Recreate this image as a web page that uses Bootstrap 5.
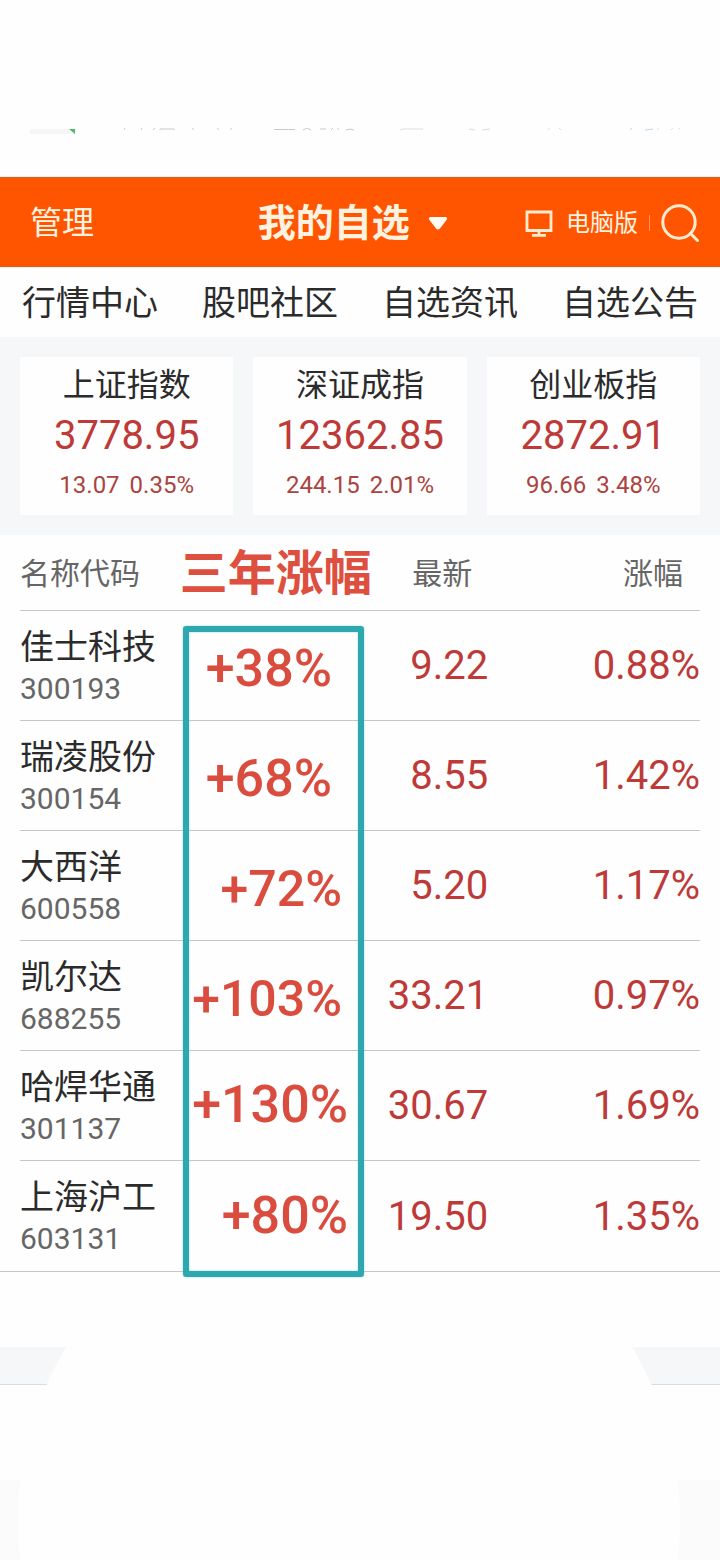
<!DOCTYPE html>
<html lang="zh-CN">
<head>
<meta charset="utf-8">
<meta name="viewport" content="width=device-width, initial-scale=1">
<title>我的自选</title>
<link rel="stylesheet" href="https://cdn.jsdelivr.net/npm/bootstrap@5.3.0/dist/css/bootstrap.min.css">
<style>
  body { font-family: Roboto, "Noto Sans CJK SC", sans-serif; color: #2b2b2b; background: #fefefe; line-height: 1; overflow-x: hidden; }
  a, button { color: inherit; text-decoration: none; }
  .status-area { height: 177px; padding-top: 128px; }
  .status-area svg { display: block; }
  .app-bar { height: 90px; padding: 2px 20px 0 30px; background: #ff5500; color: #fff3e0; border-top: 1px solid #c4683a; border-bottom: 1px solid #c4683a; box-shadow: 0 0 0 1px #ffe9d0; }
  .app-bar button { background: none; border: 0; padding: 0; white-space: nowrap; }
  .bar-left { width: 34%; font-size: 32px; }
  .bar-title { font-size: 38px; font-weight: 700; gap: 18px; }
  .bar-pc { font-size: 24px; gap: 13px; }
  .bar-sep { width: 1px; height: 16px; background: #ff9a5c; margin: 0 11px; }
  .tabs-row { height: 70px; padding-top: 2px; font-size: 34px; }
  .band { background: #f6f7f9; }
  .index-row { padding: 20px; gap: 20px; }
  .index-tile { height: 158px; padding-top: 8px; background: #fefefe; }
  .index-name { font-size: 32px; line-height: 40px; }
  .index-value { font-size: 40px; line-height: 62px; color: #bd3a38; }
  .index-change { font-size: 24px; line-height: 36px; gap: 10px; color: #ab4340; }
  .quotes { margin: 0 20px; }
  .quotes table { table-layout: fixed; width: 100%; border-collapse: collapse; }
  .quotes th { height: 75px; font-size: 30px; font-weight: 400; color: #666; white-space: nowrap; padding: 4px 0 0; }
  .quotes td { height: 110px; padding: 0; white-space: nowrap; }
  .quotes tr { border-bottom: 1px solid #c6c6c6; }
  .quotes tbody tr:last-child { border-bottom: 0; }
  .quotes tbody tr:last-child td { height: 111px; }
  .c-name { width: 23.5%; } .c-three { width: 26.5%; } .c-last { width: 19%; } .c-rate { width: 31%; }
  .quotes th.three-title { font-size: 48px; font-weight: 700; color: #dd4f3e; }
  .quotes th.head-end { padding-right: 17px; }
  .quotes td.stock { padding-top: 5px; }
  .stock-name { display: block; font-size: 34px; line-height: 42px; }
  .stock-code { display: block; font-size: 30px; line-height: 42px; color: #666; }
  .quotes td.price { padding-top: 2px; font-size: 40px; color: #bd3a38; text-align: right; }
  .quotes td.last-price { padding-right: 1px; }
  .quotes td.three { font-size: 52px; font-weight: 500; color: #d94c3e; text-align: right; }
  .quotes td.in-1 { padding: 8px 28px 0 0; }
  .quotes td.in-2 { padding: 8px 18px 0 0; font-size: 50px; }
  .quotes td.in-3 { padding-right: 12px; }
  .frame-box { position: absolute; left: 24%; width: calc(26% + 4px); top: 91px; bottom: -6px; border: 6px solid #2fa7af; border-radius: 3px; box-shadow: 0 0 2px #7fd4d8, inset 0 0 2px #7fd4d8; pointer-events: none; }
  .list-end { border-top: 1px solid #c6c6c6; height: 76px; }
  .page-foot { position: relative; overflow: hidden; }
  .foot-band { height: 38px; border-bottom: 1px solid #dcdcdc; }
  .foot-gap { height: 95px; }
  .foot-base { height: 80px; background: #fbfbfb; }
  .foot-disc { position: absolute; left: 2.5%; top: -159px; width: 92%; aspect-ratio: 1; border-radius: 50%; background: #fefefe; }
</style>
</head>
<body>
<div class="status-area">
  <svg width="100%" height="7" viewBox="0 0 720 7" aria-hidden="true">
    <path d="M30 1H75V6H30z" fill="#f4f6f7"/><path d="M69 1H75V6z" fill="#55b56a"/>
    <g fill="none" stroke="#c9c9c9">
      <path d="M124 2l1-2M141 2l1-2M153 2l2-2M160 2V1H174V2M192 0l2 2M217 0l2 2M230 2l2-2M274 1.500H295M303 2l4-2 4 2M320 1H326M331 2l2-2M338 2V0M346 2q4-2 8 0"/>
      <path d="M400 2l3-1H423M469 1l6 1M482 2l8-1M549 0v2M559 0l2 2" stroke="#dcdde2"/>
      <path d="M630 2l2-2M645 2l8-1" stroke="#bcd8ee"/><path d="M657 2l2-2M671 2l2-2M678 2l2-2" stroke="#f6dcc0"/>
    </g>
  </svg>
</div>
<header class="app-bar d-flex align-items-center">
  <div class="bar-left"><button type="button">管理</button></div>
  <button type="button" class="bar-title d-flex align-items-center">我的自选
    <svg width="20" height="13" viewBox="0 0 20 13" aria-hidden="true"><path d="M2 0H18Q20 1 18.500 3L12 11.500Q10 13.500 8 11.500L1.500 3Q0 1 2 0z" fill="#fffaf2"/></svg>
  </button>
  <button type="button" class="bar-pc d-flex align-items-center ms-auto">
    <svg width="28" height="27" viewBox="0 0 28 27" fill="none" stroke="#ffecd0" stroke-width="2.800" aria-hidden="true"><path d="M2 2H26V20.500H2zM14 20.500V25M7 25.300H21"/></svg>
    电脑版
  </button>
  <span class="bar-sep"></span>
  <button type="button" aria-label="搜索">
    <svg class="d-block" width="39" height="39" viewBox="0 0 39 39" fill="none" stroke="#ffecd0" stroke-width="3" stroke-linecap="round" aria-hidden="true"><circle cx="18" cy="18" r="16.200"/><path d="M29.500 29.500L36.500 36.500"/></svg>
  </button>
</header>
<nav class="tabs-row d-flex align-items-center text-center">
  <a class="col-3" href="#">行情中心</a><a class="col-3" href="#">股吧社区</a><a class="col-3" href="#">自选资讯</a><a class="col-3" href="#">自选公告</a>
</nav>
<section class="band index-row d-flex text-center">
  <a href="#" class="index-tile flex-fill w-100"><div class="index-name">上证指数</div><div class="index-value">3778.95</div><div class="index-change d-flex justify-content-center"><span>13.07</span><span>0.35%</span></div></a>
  <a href="#" class="index-tile flex-fill w-100"><div class="index-name">深证成指</div><div class="index-value">12362.85</div><div class="index-change d-flex justify-content-center"><span>244.15</span><span>2.01%</span></div></a>
  <a href="#" class="index-tile flex-fill w-100"><div class="index-name">创业板指</div><div class="index-value">2872.91</div><div class="index-change d-flex justify-content-center"><span>96.66</span><span>3.48%</span></div></a>
</section>
<main>
  <div class="quotes position-relative">
    <table>
      <thead>
        <tr><th class="c-name" scope="col">名称代码</th><th class="c-three three-title" scope="col">三年涨幅</th><th class="c-last head-end text-end" scope="col">最新</th><th class="c-rate head-end text-end" scope="col">涨幅</th></tr>
      </thead>
      <tbody>
        <tr><td class="stock"><span class="stock-name">佳士科技</span><span class="stock-code">300193</span></td><td class="three in-1">+38%</td><td class="price last-price">9.22</td><td class="price">0.88%</td></tr>
        <tr><td class="stock"><span class="stock-name">瑞凌股份</span><span class="stock-code">300154</span></td><td class="three in-1">+68%</td><td class="price last-price">8.55</td><td class="price">1.42%</td></tr>
        <tr><td class="stock"><span class="stock-name">大西洋</span><span class="stock-code">600558</span></td><td class="three in-2">+72%</td><td class="price last-price">5.20</td><td class="price">1.17%</td></tr>
        <tr><td class="stock"><span class="stock-name">凯尔达</span><span class="stock-code">688255</span></td><td class="three in-2">+103%</td><td class="price last-price">33.21</td><td class="price">0.97%</td></tr>
        <tr><td class="stock"><span class="stock-name">哈焊华通</span><span class="stock-code">301137</span></td><td class="three in-3">+130%</td><td class="price last-price">30.67</td><td class="price">1.69%</td></tr>
        <tr><td class="stock"><span class="stock-name">上海沪工</span><span class="stock-code">603131</span></td><td class="three in-3">+80%</td><td class="price last-price">19.50</td><td class="price">1.35%</td></tr>
      </tbody>
    </table>
    <div class="frame-box"></div>
  </div>
  <div class="list-end"></div>
</main>
<footer class="page-foot">
  <div class="foot-band band"></div>
  <div class="foot-gap"></div>
  <div class="foot-base"></div>
  <div class="foot-disc"></div>
</footer>
<script src="https://cdn.jsdelivr.net/npm/bootstrap@5.3.0/dist/js/bootstrap.bundle.min.js"></script>
</body>
</html>
